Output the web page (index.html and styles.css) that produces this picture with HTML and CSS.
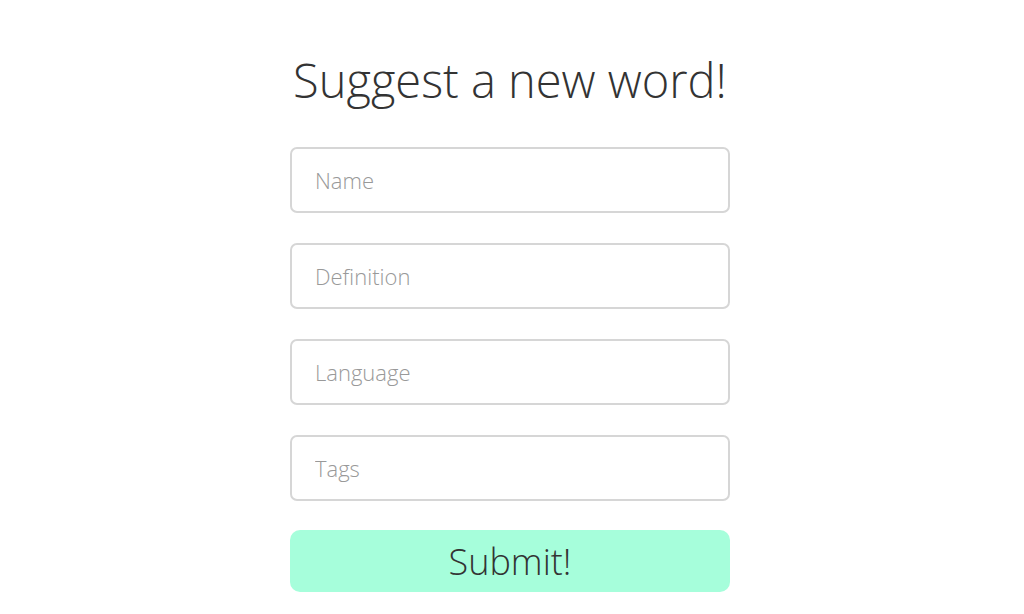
FILE: index.html
```html
<!DOCTYPE html>
<html>
<head>
<meta charset="utf-8">
<link rel="stylesheet" href="styles.css">
</head>
<body>
<main class="page">
  <form class="suggest-form">
    <h1 class="title">Suggest a new word!</h1>
    <input class="field" type="text" placeholder="Name">
    <input class="field" type="text" placeholder="Definition">
    <input class="field" type="text" placeholder="Language">
    <input class="field" type="text" placeholder="Tags">
    <button class="submit" type="button">Submit!</button>
  </form>
</main>
</body>
</html>
```
FILE: styles.css
```css
html, body {
  margin: 0;
  padding: 0;
  background: #fff;
}
body {
  font-family: "Open Sans", "Liberation Sans", sans-serif;
  font-weight: 300;
  color: #333;
}
.page {
  display: flex;
  justify-content: center;
  padding-right: 4px;
}
.suggest-form {
  width: 440px;
  display: flex;
  flex-direction: column;
  gap: 30px;
  padding-top: 48px;
}
.title {
  margin: 0 -20px 5px -20px;
  font-size: 47px;
  font-weight: 300;
  text-align: center;
  white-space: nowrap;
  line-height: 64px;
  color: #333;
}
.field {
  box-sizing: border-box;
  height: 66px;
  width: 100%;
  border: 2px solid #d6d6d6;
  border-radius: 7px;
  padding: 0 23px;
  font-family: "Open Sans", "Liberation Sans", sans-serif;
  font-weight: 300;
  font-size: 22px;
  color: #333;
  outline: none;
}
.field::placeholder {
  color: #999;
  font-weight: 300;
}
.submit {
  margin-top: -1px;
  height: 62px;
  border: none;
  border-radius: 10px;
  background: #a6fedb;
  font-family: "Open Sans", "Liberation Sans", sans-serif;
  font-weight: 300;
  font-size: 36px;
  color: #333;
  padding: 0;
}
```
